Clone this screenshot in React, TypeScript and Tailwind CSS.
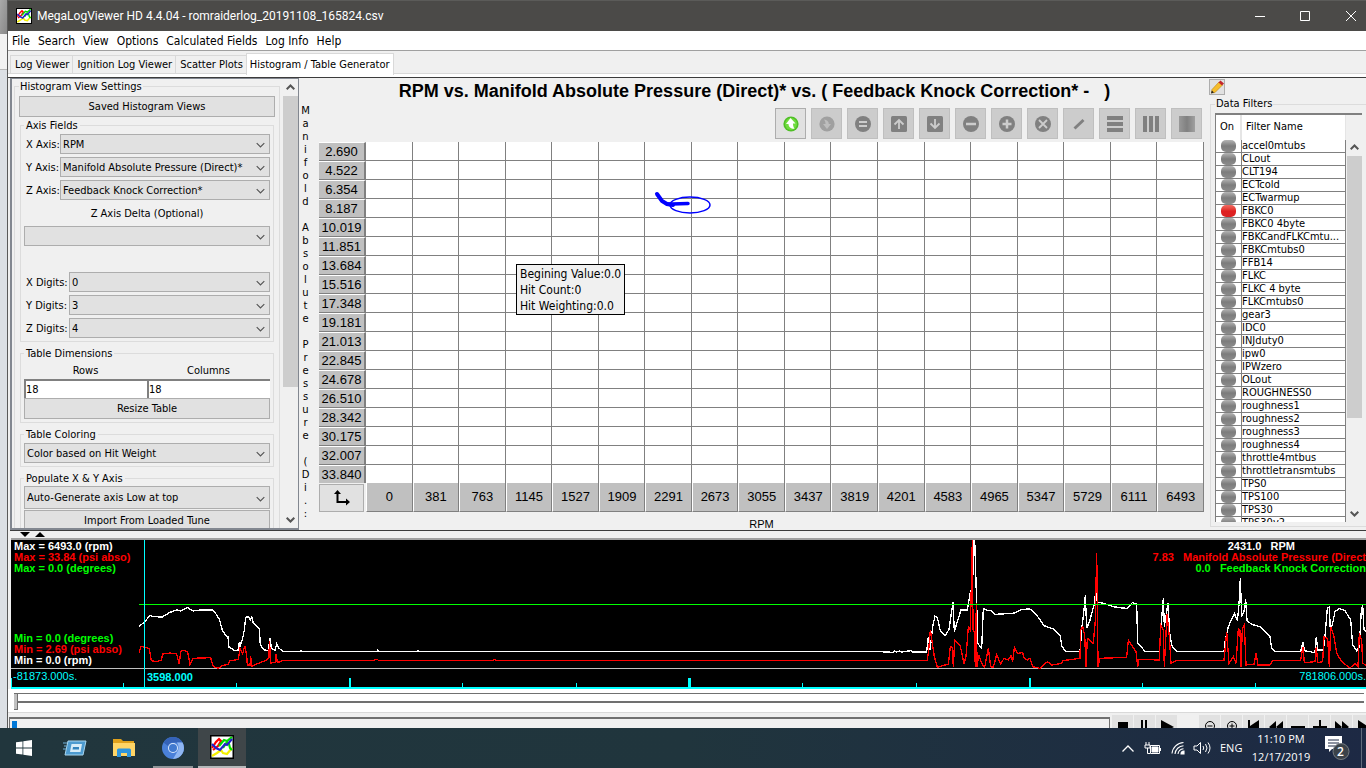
import React from "react";

const yAxis = ["2.690", "4.522", "6.354", "8.187", "10.019", "11.851", "13.684", "15.516", "17.348", "19.181", "21.013", "22.845", "24.678", "26.510", "28.342", "30.175", "32.007", "33.840"];
const xAxis = ["0", "381", "763", "1145", "1527", "1909", "2291", "2673", "3055", "3437", "3819", "4201", "4583", "4965", "5347", "5729", "6111", "6493"];
const filters = ["accel0mtubs", "CLout", "CLT194", "ECTcold", "ECTwarmup", "FBKC0", "FBKC0 4byte", "FBKCandFLKCmtu...", "FBKCmtubs0", "FFB14", "FLKC", "FLKC 4 byte", "FLKCmtubs0", "gear3", "IDC0", "INJduty0", "ipw0", "IPWzero", "OLout", "ROUGHNESS0", "roughness1", "roughness2", "roughness3", "roughness4", "throttle4mtbus", "throttletransmtubs", "TPS0", "TPS100", "TPS30", "TPS30v2"];
const axisLabel = [..."Manifold Absolute Pressure (Di.", ":"];

const rpmTrace =
  "417,290 434,275 450,257 462,260 487,261 510,247 530,240 543,243 563,233 580,243 600,240 637,240 648,252 658,268 667,300 676,315 684,320 687,352 697,356 702,361 714,361 717,338 720,348 728,325 733,300 737,262 745,260 752,270 755,258 760,280 778,295 781,345 792,360 805,361 810,323 814,355 825,361 830,342 837,355 850,364 900,364 903,361 906,365 1130,365 1133,361 1136,365 1250,365 1254,362 1258,365 1700,365 2100,365 2500,365 2640,365 2680,367 2684,362 2688,366 2700,363 2704,366 2734,362 2738,366 2780,366 2785,320 2790,360 2798,290 2805,258 2812,262 2820,300 2835,318 2847,298 2854,250 2859,216 2863,305 2872,275 2883,240 2902,240 2906,215 2912,180 2917,200 2921,30 2924,30 2930,220 2933,340 2945,355 2950,235 2958,240 2975,243 2985,253 3040,250 3065,238 3090,237 3110,255 3132,287 3160,297 3180,315 3186,350 3198,365 3240,365 3246,290 3252,240 3256,195 3260,295 3270,270 3282,225 3288,180 3292,216 3310,220 3340,230 3365,234 3382,235 3397,218 3410,222 3413,340 3430,358 3435,365 3478,365 3482,300 3490,205 3493,290 3504,220 3510,320 3517,350 3530,365 3672,365 3676,330 3685,290 3703,250 3712,272 3717,225 3721,145 3725,260 3732,245 3737,208 3741,272 3755,283 3780,290 3810,320 3815,355 3825,365 3902,365 3909,335 3913,362 3945,368 3949,320 3953,360 3970,360 3975,320 3982,235 3988,232 3991,300 3998,280 4005,245 4018,236 4035,242 4052,270 4058,345 4070,362 4078,350 4084,240 4088,225 4092,300 4098,305";
const mapTrace =
  "417,368 423,349 440,353 448,357 454,392 470,395 484,390 488,372 510,369 530,372 538,403 542,365 550,361 563,366 570,404 580,385 632,383 640,410 655,415 665,408 685,402 690,392 705,390 715,388 720,355 728,372 734,347 740,375 742,405 750,405 752,378 755,410 770,402 780,398 800,390 806,385 809,332 811,400 826,396 828,372 832,398 850,391 1120,391 1130,388 1136,391 1480,391 1484,388 1488,391 2640,391 2782,391 2786,360 2791,300 2797,340 2803,380 2812,412 2845,402 2851,350 2857,352 2860,412 2864,330 2880,345 2892,400 2898,380 2905,290 2911,300 2917,30 2919,300 2923,305 2926,412 2929,220 2931,410 2936,375 2945,400 2954,412 2965,355 2972,410 2980,412 2990,374 3002,402 3012,385 3025,390 3033,377 3038,395 3043,352 3052,370 3068,368 3073,385 3082,390 3090,385 3098,410 3120,415 3142,395 3155,405 3185,400 3188,392 3240,385 3242,300 3248,290 3254,315 3258,410 3262,325 3280,340 3286,270 3290,68 3292,200 3294,410 3300,385 3380,382 3385,330 3408,365 3413,410 3417,388 3478,390 3482,285 3490,300 3493,410 3501,252 3508,320 3513,400 3530,391 3672,391 3676,350 3680,305 3687,400 3700,380 3708,400 3715,295 3720,300 3723,410 3727,295 3733,285 3738,405 3762,402 3768,370 3774,405 3810,405 3818,391 3902,391 3909,350 3913,398 3945,395 3949,350 3953,398 3968,395 3972,320 3983,325 3988,410 3992,290 4002,320 4010,370 4025,395 4050,414 4065,400 4074,410 4078,310 4085,330 4088,400 4098,405";
const timeTicks = [33, 371, 710, 1049, 1388, 1728, 2068, 2408, 2749, 3090, 3427, 3767];

function AppIcon({ className }: { className: string }) {
  return (
    <svg viewBox="0 0 24 24" className={className}>
      <rect x="0.75" y="0.75" width="22.5" height="22.5" fill="#fff" stroke="#000" strokeWidth="1.5" />
      <g fill="none" strokeWidth="2.2">
        <path d="M2 21l5-3 4-3 2 3 4 1 5-6" stroke="#f5f000" />
        <path d="M2 13l4-6 3-3 2 2-3 5-5 4" stroke="#f00" />
        <path d="M9 11l5-6 3 1 5-4M13 13l4-6 2 2 1 4 2 2" stroke="#0d0" />
        <path d="M2 9l4 4 4 2 5-6 2 1 5-6" stroke="#22c" />
      </g>
    </svg>
  );
}

function Chevron({ up = false, className = "" }: { up?: boolean; className?: string }) {
  return (
    <svg viewBox="0 0 9 7" className={"h-[7px] w-[9px] " + className} fill="none" stroke="#555" strokeWidth="1.2">
      <path d={up ? "M.7 5.3L4.5 1.5l3.8 3.8" : "M.7 1.7l3.8 3.8 3.8-3.8"} />
    </svg>
  );
}

function Combo({ id, value, label, tall = false }: { id: string; value: string; label?: string; tall?: boolean }) {
  return (
    <div className="relative min-w-0 flex-1">
      <select
        id={id}
        aria-label={label}
        defaultValue={value}
        className={"block w-full appearance-none border border-[#adadad] bg-[#e1e1e1] pl-[2px] pt-px text-[11px] leading-[16px] outline-none " + (tall ? "h-[23px]" : "h-5")}
      >
        <option>{value}</option>
      </select>
      <Chevron className="pointer-events-none absolute right-[5px] top-[55%] -translate-y-1/2" />
    </div>
  );
}

function Group({ title, children, className = "" }: { title: string; children: React.ReactNode; className?: string }) {
  return (
    <fieldset className={"min-w-0 border border-[#dcdcdc] px-[3px] " + className}>
      <legend className="h-[14px] px-[2px] leading-[16px]">{title}</legend>
      {children}
    </fieldset>
  );
}

function PushButton({ children }: { children: React.ReactNode }) {
  return <button className="block h-[21px] w-full border border-[#adadad] bg-[#e1e1e1] text-center leading-[18px]">{children}</button>;
}

function ScrollBar({ share }: { share: string }) {
  return (
    <div className="flex w-[15px] shrink-0 flex-col items-center bg-[#f0f0f0]">
      <div className="flex h-[17px] shrink-0 items-center"><Chevron up className="stroke-2" /></div>
      <div className="min-h-0 w-full flex-1"><div className={"w-full bg-[#cdcdcd] " + share} /></div>
      <div className="flex h-[17px] shrink-0 items-center"><Chevron className="stroke-2" /></div>
    </div>
  );
}

function Settings() {
  return (
    <section className="flex w-[289px] shrink-0 overflow-hidden border-2 border-t border-r border-[#828790] bg-[#f0f0f0]">
      <div className="min-w-0 flex-1 pl-[2px] pr-[3px]">
        <fieldset className="h-full min-w-0 overflow-hidden border border-b-0 border-[#dcdcdc] px-1">
          <legend className="h-[14px] px-px leading-[16px]">Histogram View Settings</legend>
          <div className="pt-[3px]"><PushButton>Saved Histogram Views</PushButton></div>
          <div className="mt-px flex flex-col gap-1 px-px">
            <Group title="Axis Fields" className="pb-[3px]">
              <div className="flex flex-col gap-[3px] pt-[2px]">
                {[["X", "RPM"], ["Y", "Manifold Absolute Pressure (Direct)*"], ["Z", "Feedback Knock Correction*"]].map(([a, v]) => (
                  <div key={a} className="flex items-center">
                    <label htmlFor={"axis" + a} className="w-9 whitespace-nowrap pl-[2px] pt-[2px]">{a} Axis:</label>
                    <Combo id={"axis" + a} value={v} />
                  </div>
                ))}
              </div>
              <label htmlFor="delta" className="block pb-[5px] pt-[7px] text-center leading-[14px]">Z Axis Delta (Optional)</label>
              <div className="flex"><Combo id="delta" value="" /></div>
              <div className="mt-[26px] flex flex-col gap-[3px]">
                {[["X", "0"], ["Y", "3"], ["Z", "4"]].map(([a, v]) => (
                  <div key={a} className="flex items-center">
                    <label htmlFor={"digits" + a} className="w-[45px] whitespace-nowrap pl-[2px] pt-[2px]">{a} Digits:</label>
                    <Combo id={"digits" + a} value={v} />
                  </div>
                ))}
              </div>
            </Group>
            <Group title="Table Dimensions" className="pb-[3px]">
              <div className="grid grid-cols-2 pt-1">
                {["Rows", "Columns"].map((t) => (
                  <label key={t} className="text-center leading-[14px]">
                    {t}
                    <input defaultValue="18" className="mt-px block h-[19px] w-full border-l-2 border-t-2 border-[#808080] bg-white text-[11px] outline-none" />
                  </label>
                ))}
              </div>
              <PushButton>Resize Table</PushButton>
            </Group>
            <Group title="Table Coloring" className="pb-[3px]">
              <div className="flex pt-[2px]"><Combo id="coloring" label="Table Coloring" value="Color based on Hit Weight" /></div>
            </Group>
            <Group title="Populate X & Y Axis" className="pb-2">
              <div className="flex pb-px pt-px"><Combo id="populate" label="Populate X and Y Axis" value="Auto-Generate axis Low at top" tall /></div>
              <PushButton>Import From Loaded Tune</PushButton>
            </Group>
          </div>
        </fieldset>
      </div>
      <ScrollBar share="h-[70%]" />
    </section>
  );
}

const toolIcons: { name: string; icon: React.ReactNode }[] = [
  { name: "Load", icon: <><circle cx="8" cy="8" r="7.6" fill="#4fbf26" /><circle cx="8" cy="8" r="6" fill="#6fdc3d" /><path d="M7.5 2L12.500 7.500H10c0 2 .4 3.400 1.500 5.300C8 13 5.500 11 5.500 8H3z" fill="#fff" /></> },
  { name: "Save", icon: <><circle cx="8" cy="8" r="7.6" fill="#a0a0a0" /><path d="M8 13L4 8h2.500C6.500 6 6 5 5 3.500 8 4 9.800 5.500 9.800 8H12z" fill="#bdbdbd" /></> },
  { name: "Set equal", icon: <><circle cx="8" cy="8" r="8" fill="#808080" /><path d="M4 6h8M4 10h8" stroke="#cccccc" strokeWidth="2" /></> },
  { name: "Increase", icon: <><rect width="16" height="16" rx="1.500" fill="#808080" /><path d="M8 13V4M3.500 8.500L8 4l4.500 4.500" stroke="#cccccc" strokeWidth="1.800" fill="none" /></> },
  { name: "Decrease", icon: <><rect width="16" height="16" rx="1.500" fill="#808080" /><path d="M8 3v9M3.500 7.500L8 12l4.500-4.500" stroke="#cccccc" strokeWidth="1.800" fill="none" /></> },
  { name: "Subtract", icon: <><circle cx="8" cy="8" r="8" fill="#808080" /><path d="M3 8h10" stroke="#cccccc" strokeWidth="2.500" /></> },
  { name: "Add", icon: <><circle cx="8" cy="8" r="8" fill="#808080" /><path d="M3.500 8h9M8 3.500v9" stroke="#cccccc" strokeWidth="2.500" /></> },
  { name: "Multiply", icon: <><circle cx="8" cy="8" r="8" fill="#808080" /><path d="M4 4l8 8M12 4l-8 8" stroke="#cccccc" strokeWidth="1.800" /></> },
  { name: "Edit line", icon: <path d="M3.500 12.500l9-8.500" stroke="#808080" strokeWidth="3" /> },
  { name: "Interpolate rows", icon: <path d="M0 2h16M0 8h16M0 14h16" stroke="#808080" strokeWidth="4" /> },
  { name: "Interpolate columns", icon: <path d="M2 0v16M8 0v16M14 0v16" stroke="#808080" strokeWidth="4" /> },
  { name: "Interpolate both", icon: <><defs><linearGradient id="fade"><stop stopColor="#999" /><stop offset=".5" stopColor="#808080" /><stop offset="1" stopColor="#a0a0a0" /></linearGradient></defs><rect width="16" height="16" fill="url(#fade)" /></> },
];

function Histogram() {
  return (
    <section className="flex min-w-0 flex-1 flex-col pl-px font-['Liberation_Sans',sans-serif]">
      <h1 className="h-[26px] whitespace-pre text-center text-[18px] font-bold leading-[26px]">RPM vs. Manifold Absolute Pressure (Direct)* vs. ( Feedback Knock Correction* -   )</h1>
      <div className="flex min-h-0 flex-1">
        <div className="w-[11px] shrink-0 text-center font-['DejaVu_Sans',sans-serif] text-[10px] leading-[13px]">
          {axisLabel.map((c, i) => (
            <div key={i} className="h-[13px]">{c}</div>
          ))}
        </div>
        <div className="flex min-w-0 flex-1 flex-col pl-2 pr-[5px]">
          <div className="flex h-[38px] shrink-0 justify-end gap-[5px] pr-[2px] pt-1">
            {toolIcons.map((t, i) => (
              <button key={t.name} aria-label={t.name} className={"flex h-[31px] w-[31px] items-center justify-center border " + (i === 0 ? "border-[#adadad] bg-[#e1e1e1]" : "border-[#bfbfbf] bg-[#cccccc]")}>
                <svg viewBox="0 0 16 16" className="h-4 w-4">{t.icon}</svg>
              </button>
            ))}
          </div>
          <div className="relative">
            <table className="w-full table-fixed border-separate border-spacing-0 text-[13px]">
              <colgroup>
                <col className="w-[47px]" />
                {xAxis.map((x) => <col key={x} />)}
              </colgroup>
              <tbody>
                {yAxis.map((y) => (
                  <tr key={y} className="group h-[19px] last:h-[18px]">
                    <th className="border-b border-r-2 border-t border-b-[#808080] border-r-[#808080] border-t-white bg-[#c0c0c0] p-0 text-center font-normal leading-[17px] group-last:border-b-0">{y}</th>
                    {xAxis.map((x) => <td key={x} className="border-b border-r border-[#808080] bg-white p-0 group-last:border-b-0" />)}
                  </tr>
                ))}
              </tbody>
              <tfoot>
                <tr className="h-[29px]">
                  <td className="p-0 pr-[2px] pt-px">
                    <button aria-label="Swap axes" className="flex h-7 w-full items-center justify-center border border-[#adadad] bg-[#e1e1e1]">
                      <svg viewBox="0 0 16 16" className="h-4 w-4"><path d="M3.500 3v9h9" fill="none" stroke="#000" strokeWidth="2" /><path d="M3.500 0L0 4h7zM16 12l-4-3.500v7z" /></svg>
                    </button>
                  </td>
                  {xAxis.map((x) => <th key={x} className="border-b border-l border-r border-b-[#808080] border-l-white border-r-[#808080] bg-[#c0c0c0] p-0 font-normal">{x}</th>)}
                </tr>
              </tfoot>
            </table>
            <svg className="pointer-events-none absolute left-[330px] top-12 h-8 w-[70px]" viewBox="0 0 70 32" fill="none" stroke="#00f">
              <path d="M8 4l5 7 5 3 6 1" strokeWidth="4" strokeLinecap="round" />
              <path d="M18 14h5l16-.500" strokeWidth="3.500" strokeLinecap="round" />
              <ellipse cx="41" cy="15" rx="20" ry="8" strokeWidth="1.500" />
            </svg>
            <div role="tooltip" className="absolute left-[197px] top-[122px] whitespace-nowrap border border-black bg-[#f0f0f0] px-[3px] pt-px font-['DejaVu_Sans_Condensed',sans-serif] text-[12px] leading-4">
              <div>Begining Value:0.0</div>
              <div>Hit Count:0</div>
              <div>Hit Weighting:0.0</div>
            </div>
          </div>
          <div className="pt-[5px] text-center text-[11px] leading-[14px]">RPM</div>
        </div>
      </div>
    </section>
  );
}

function Filters() {
  return (
    <aside className="flex w-[157px] shrink-0 flex-col pb-[3px] pt-px">
      <button aria-label="Edit filters" className="flex h-4 w-4 shrink-0 items-center justify-center border border-[#adadad] bg-[#e1e1e1]">
        <svg viewBox="0 0 14 14" className="h-[14px] w-[14px]">
          <path d="M2 9.500L9 2l3.500 3L5 12.500 1.500 13z" fill="#f6bd2c" stroke="#b98510" strokeWidth=".600" />
          <path d="M8.500 2.500L10.500.5 14 3.500l-2 2z" fill="#c2272d" />
          <path d="M1 13.500l.8-3 2.200 2z" fill="#222" />
        </svg>
      </button>
      <fieldset className="ml-px mt-[2px] flex min-h-0 min-w-0 flex-1 flex-col border border-r-0 border-[#dcdcdc] pb-1 pl-1">
        <legend className="h-[14px] px-px leading-[14px]">Data Filters</legend>
        <div className="mt-[2px] flex h-[409px] w-[147px] overflow-hidden border-l border-t-2 border-[#808080]">
          <div className="min-w-0 flex-1 overflow-hidden">
            <table className="w-full table-fixed border-separate border-spacing-0">
              <colgroup><col className="w-[26px]" /><col /></colgroup>
              <thead>
                <tr className="h-[25px] bg-white text-left">
                  <th className="border-r-2 border-[#e5e5e5] p-0 pl-1 font-normal">On</th>
                  <th className="border-r border-[#e5e5e5] p-0 pl-1 font-normal">Filter Name</th>
                </tr>
              </thead>
              <tbody>
                {filters.map((f) => (
                  <tr key={f} className="h-[13px] bg-white">
                    <td className="border-b border-r border-[#808080] p-0">
                      <button aria-label={"Toggle " + f} className={"mx-auto block h-3 w-[15px] rounded-[5px] bg-linear-to-b " + (f === "FBKC0" ? "from-[#ee6a62] via-[#e02020] to-[#d92323]" : "from-[#b4b4b4] via-[#7c7c7c] to-[#8c8c8c]")} />
                    </td>
                    <td className="overflow-hidden whitespace-nowrap border-b border-r border-[#808080] p-0 leading-[12px]">{f}</td>
                  </tr>
                ))}
              </tbody>
            </table>
          </div>
          <div className="flex pl-px pt-6"><ScrollBar share="h-[75%]" /></div>
        </div>
      </fieldset>
    </aside>
  );
}

function Graph() {
  return (
    <section className="relative ml-[3px] h-[151px] shrink-0 overflow-hidden border-t-2 border-[#a0a0a0] bg-black font-['Liberation_Sans',sans-serif] text-[11px] font-bold leading-[11px]">
      <svg viewBox="33 30 4065 447" preserveAspectRatio="none" className="block h-full w-full" fill="none" shapeRendering="crispEdges">
        <path d="M33 415H4098" stroke="#c0c0c0" strokeWidth="3" />
        <polyline points={rpmTrace} stroke="#fff" strokeWidth="4" />
        <polyline points={mapTrace} stroke="#f00" strokeWidth="4" />
        <rect x="417" y="222" width="3681" height="3" fill="#0f0" />
        <path d="M433 28V475M33 474H4098" stroke="#0ff" strokeWidth="4" />
        {timeTicks.map((x, i) => (
          <path key={x} d={`M${x} ${i % 3 ? 459 : 444}V475`} stroke="#0ff" strokeWidth={i % 3 ? 3 : 7} />
        ))}
      </svg>
      <div className="absolute left-[3px] top-px text-white">Max = 6493.0 (rpm)<div className="text-[#f00]">Max = 33.84 (psi abso)</div><div className="text-[#0f0]">Max = 0.0 (degrees)</div></div>
      <div className="absolute left-[3px] top-[93px] text-[#0f0]">Min = 0.0 (degrees)<div className="text-[#f00]">Min = 2.69 (psi abso)</div><div className="text-white">Min = 0.0 (rpm)</div></div>
      <div className="absolute right-0 top-px whitespace-pre text-right">
        <div className="pr-[71px] text-white">2431.0   RPM</div>
        <div className="text-[#f00]">7.83   Manifold Absolute Pressure (Direct</div>
        <div className="text-[#0f0]">0.0   Feedback Knock Correction</div>
      </div>
      <div className="absolute left-[2px] top-[131px] font-normal text-[#0ff]">-81873.000s.</div>
      <div className="absolute left-[136px] top-[132px] text-[#0ff]">3598.000</div>
      <div className="absolute right-0 top-[131px] font-normal text-[#0ff]">781806.000s.</div>
    </section>
  );
}

const playIcons: { name: string; d: string }[] = [
  { name: "Stop", d: "M3 3h10v10H3z" },
  { name: "Pause", d: "M4 1h2v14H4zM8 1h2v14H8z" },
  { name: "Play", d: "M2 1l13 7-13 7z" },
];
const navIcons: { name: string; d: string }[] = [
  { name: "First", d: "M2 1h2v6l9-6v14L4 9v6H2z" },
  { name: "Rewind", d: "M8 2v12L1 8zM15 2v12L8 8z" },
  { name: "Slower", d: "M1 7h14v2H1z" },
  { name: "Faster", d: "M1 7h6V1h2v6h6v2H9v6H7V9H1z" },
  { name: "Forward", d: "M1 2v12l7-6zM8 2v12l7-6z" },
  { name: "Last", d: "M2 1l9 6V1h2v14h-2V9l-9 6z" },
];

function PlayButton({ name, children }: { name: string; children: React.ReactNode }) {
  return (
    <button aria-label={name} className="flex h-6 w-[21px] shrink-0 items-center justify-center bg-[#e1e1e1]">
      <svg viewBox="0 0 16 16" className="h-4 w-4">{children}</svg>
    </button>
  );
}

function Playback() {
  return (
    <>
      <div className="h-[23px] shrink-0 bg-white pl-[6px] pr-[2px] pt-1">
        <input
          type="range"
          aria-label="Log position"
          defaultValue="0"
          className="block h-4 w-full appearance-none bg-transparent outline-none [&::-webkit-slider-runnable-track]:-mt-[6px] [&::-webkit-slider-runnable-track]:h-[10px] [&::-webkit-slider-runnable-track]:border-b-2 [&::-webkit-slider-runnable-track]:border-t [&::-webkit-slider-runnable-track]:border-[#707070] [&::-webkit-slider-thumb]:h-4 [&::-webkit-slider-thumb]:w-1 [&::-webkit-slider-thumb]:appearance-none [&::-webkit-slider-thumb]:border-b [&::-webkit-slider-thumb]:border-r [&::-webkit-slider-thumb]:border-[#707070] [&::-webkit-slider-thumb]:bg-[#c0c0c0]"
        />
      </div>
      <div className="flex h-4 shrink-0 overflow-hidden border-t border-[#d9d9d9] pl-px">
        <div className="mr-[2px] mt-1 h-6 min-w-0 flex-1 border border-t-2 border-[#707070] pl-[2px] pt-[2px]"><div className="h-full w-[5px] bg-[#0078d7]" /></div>
        <div className="-mr-2 mt-[2px] flex h-6 gap-px">
          {playIcons.map((p) => <PlayButton key={p.name} name={p.name}><path d={p.d} /></PlayButton>)}
          <div className="w-5" />
          <PlayButton name="Zoom out"><circle cx="8" cy="7" r="4.500" fill="none" stroke="#000" /><path d="M5.500 7h5M5 10.500L2 14" stroke="#000" /></PlayButton>
          <PlayButton name="Zoom in"><circle cx="8" cy="7" r="4.500" fill="none" stroke="#000" /><path d="M5.500 7h5M8 4.500v5M5 10.500L2 14" stroke="#000" /></PlayButton>
          {navIcons.map((p) => <PlayButton key={p.name} name={p.name}><path d={p.d} /></PlayButton>)}
        </div>
      </div>
    </>
  );
}

function Taskbar() {
  return (
    <footer className="flex h-10 shrink-0 items-stretch bg-linear-to-r from-[#21363d] via-[#20353d] to-[#1d2944] font-['Open_Sans',sans-serif] text-white">
      <button aria-label="Start" className="flex w-12 items-center justify-center">
        <svg viewBox="0 0 16 16" className="h-4 w-4" fill="#fff"><path d="M0 2.300L6.500 1.400v6.200H0zM7.300 1.300L16 0v7.600H7.300zM0 8.400h6.500v6.200L0 13.700zM7.300 8.400H16V16l-8.700-1.300z" /></svg>
      </button>
      <button aria-label="Run" className="flex w-[54px] items-center justify-center">
        <svg viewBox="0 0 24 16" className="h-4 w-6">
          <path d="M5 1h18l-3 14H2z" fill="#4d9bd0" stroke="#a9d6ef" />
          <path d="M8.500 4H19l-1.500 8H7z" fill="#d7ecf8" /><path d="M10 7h6v2.500H9.500z" fill="#3384bd" />
          <path d="M0 3h4M1 6h2.500M0 9h3" stroke="#74b4dc" />
        </svg>
      </button>
      <button aria-label="File Explorer" className="flex w-11 items-center justify-center">
        <svg viewBox="0 0 22 18" className="h-[18px] w-[22px]">
          <path d="M0 0h8l2 2h11v4H0z" fill="#e0a11c" /><path d="M0 4h22v13H0z" fill="#ffd566" />
          <path d="M4 18v-7q0-1.500 1.500-1.500h11Q18 9.500 18 11v7h-4v-4H8v4z" fill="#2e95dd" />
        </svg>
      </button>
      <button aria-label="Chromium" className="relative flex w-[52px] items-center justify-center pl-[2px]">
        <svg viewBox="0 0 22 22" className="h-[22px] w-[22px]">
          <circle cx="11" cy="11" r="11" fill="#4a80d8" />
          <path d="M1.500 5.500A11 11 0 0 1 20.500 5.500H11a5.500 5.500 0 0 0-5 3.500z" fill="#3563b8" />
          <path d="M20.500 5.500A11 11 0 0 1 11 22l5-8.500q1.500-4-1-8z" fill="#8fb6f2" />
          <circle cx="11" cy="11" r="5" fill="#dbe8fb" /><circle cx="11" cy="11" r="4" fill="#4179cf" />
        </svg>
        <span className="absolute bottom-0 left-[7px] h-[2px] w-10 bg-[#8f9598]" />
      </button>
      <button aria-label="MegaLogViewer" className="flex w-12 items-center justify-center border-b-2 border-[#b5b8ba] bg-[#3f4649]">
        <AppIcon className="h-6 w-6" />
      </button>
      <div className="flex-1" />
      <div className="flex items-center text-[11px]">
        <svg viewBox="0 0 12 7" className="mr-[10px] h-[7px] w-3" fill="none" stroke="#fff" strokeWidth="1.300"><path d="M.5 6.500L6 1l5.500 5.500" /></svg>
        <svg viewBox="0 0 18 14" className="mr-[9px] h-[14px] w-[18px]" fill="none" stroke="#fff"><path d="M2 1v3M5 1v3M1 4h5v3H1zM3.500 7v5.500H6" /><path d="M6.500 4.500h9v8h-9zM16.500 7v3" /><path d="M8 6h6v5H8z" fill="#fff" /></svg>
        <svg viewBox="0 0 14 14" className="mr-2 h-[14px] w-[14px]" fill="none" stroke="#fff" strokeWidth="1.100"><path d="M1 12.500A12 12 0 0 1 12.500 1.500M4 13a9 9 0 0 1 8.500-8.300M7 13a6 6 0 0 1 5.500-5.300" /><path d="M10 13a3 3 0 0 1 3-3v3z" fill="#fff" /></svg>
        <svg viewBox="0 0 18 14" className="mr-[9px] h-[14px] w-[18px]" fill="none" stroke="#fff"><path d="M1 5h3l3.500-3.500v11L4 9H1zM10 5q1.500 2 0 4M12.500 3q3 4 0 8M15 1.500q4 5.500 0 11" /></svg>
        <span className="w-7">ENG</span>
        <div className="w-[66px] text-center leading-[18px]"><div>11:10 PM</div><div>12/17/2019</div></div>
        <button aria-label="Notifications" className="relative ml-[11px] h-6 w-7">
          <svg viewBox="0 0 28 24" className="h-6 w-7"><path d="M0 0h17v13H7l-3 3v-3H0z" fill="#fff" /><path d="M3 4h11M3 7h11M3 10h7" stroke="#1d2944" /><circle cx="16" cy="15.500" r="8" fill="#3b4249" stroke="#767c82" /></svg>
          <span className="absolute left-3 top-[7px] text-[12px] font-semibold leading-[17px]">2</span>
        </button>
        <span className="ml-2 h-10 w-[5px] border-l border-[#606b7c]" />
      </div>
    </footer>
  );
}

export default function App() {
  const tabs = ["Log Viewer", "Ignition Log Viewer", "Scatter Plots"];
  return (
    <div className="flex h-screen flex-col overflow-hidden bg-[#f0f0f0] font-['DejaVu_Sans_Condensed','DejaVu_Sans',sans-serif] text-[11px] text-black">
      <div className="flex min-h-0 flex-1">
        <div className="flex w-2 shrink-0 flex-col border-r border-[#5a5a5a]">
          <div className="h-[34px] bg-linear-to-br from-[#aaa] to-[#888]" />
          <div className="h-9 border-b border-[#b8b8b8] bg-[#f2f2f2]" />
          <div className="flex-1 bg-[#dce0e5]" />
        </div>
        <div className="flex min-w-0 flex-1 flex-col">
          <header className="flex h-[31px] shrink-0 items-center border-t border-[#5b5b59] bg-[#4b4a48] pl-2 text-[12px] text-white">
            <AppIcon className="h-4 w-4" />
            <span className="pl-[5px] font-['Roboto',sans-serif]">MegaLogViewer HD 4.4.04 - romraiderlog_20191108_165824.csv</span>
            <span className="flex-1" />
            {["M0 5.500h10", "M.5.5h9v9h-9z", "M0 0l10 10M10 0L0 10"].map((d, i) => (
              <button key={d} aria-label={["Minimize", "Maximize", "Close"][i]} className={"flex h-full items-center justify-center " + (i === 2 ? "w-[39px] pl-2" : "w-[45px]")}>
                <svg viewBox="0 0 10 10" className="h-[10px] w-[10px] overflow-visible" fill="none" stroke="#fff"><path d={d} /></svg>
              </button>
            ))}
          </header>
          <nav className="flex h-5 shrink-0 items-center gap-2 border-b border-[#a0a0a0] bg-white pl-1 text-[12px]">
            {["File", "Search", "View", "Options", "Calculated Fields", "Log Info", "Help"].map((m) => <a key={m} href="#">{m}</a>)}
          </nav>
          <div className="flex h-[27px] shrink-0 items-start border-b border-[#3c3c3c] bg-[linear-gradient(#f0f0f0_22px,#d9d9d9_22px,#d9d9d9_23px,#fff_23px)] pl-[2px] pt-[2px]" role="tablist">
            {tabs.map((t) => (
              <button key={t} role="tab" className="mt-[2px] h-[19px] border border-r-0 border-[#d9d9d9] pl-1 pr-[3px] leading-[18px]">{t}</button>
            ))}
            <button role="tab" aria-selected className="h-[22px] border border-b-0 border-[#d9d9d9] bg-white px-[3px] leading-[18px]">Histogram / Table Generator</button>
          </div>
          <main className="ml-[2px] flex min-h-0 flex-1 border-b border-[#3c3c3c]">
            <Settings />
            <Histogram />
            <Filters />
          </main>
          <div className="flex h-[7px] shrink-0 items-center gap-[5px] pl-3">
            <svg viewBox="0 0 10 5" className="h-[5px] w-[10px]"><path d="M0 0h10L5 5z" /></svg>
            <svg viewBox="0 0 10 5" className="h-[5px] w-[10px]"><path d="M0 5h10L5 0z" /></svg>
          </div>
          <Graph />
          <Playback />
        </div>
      </div>
      <Taskbar />
    </div>
  );
}
